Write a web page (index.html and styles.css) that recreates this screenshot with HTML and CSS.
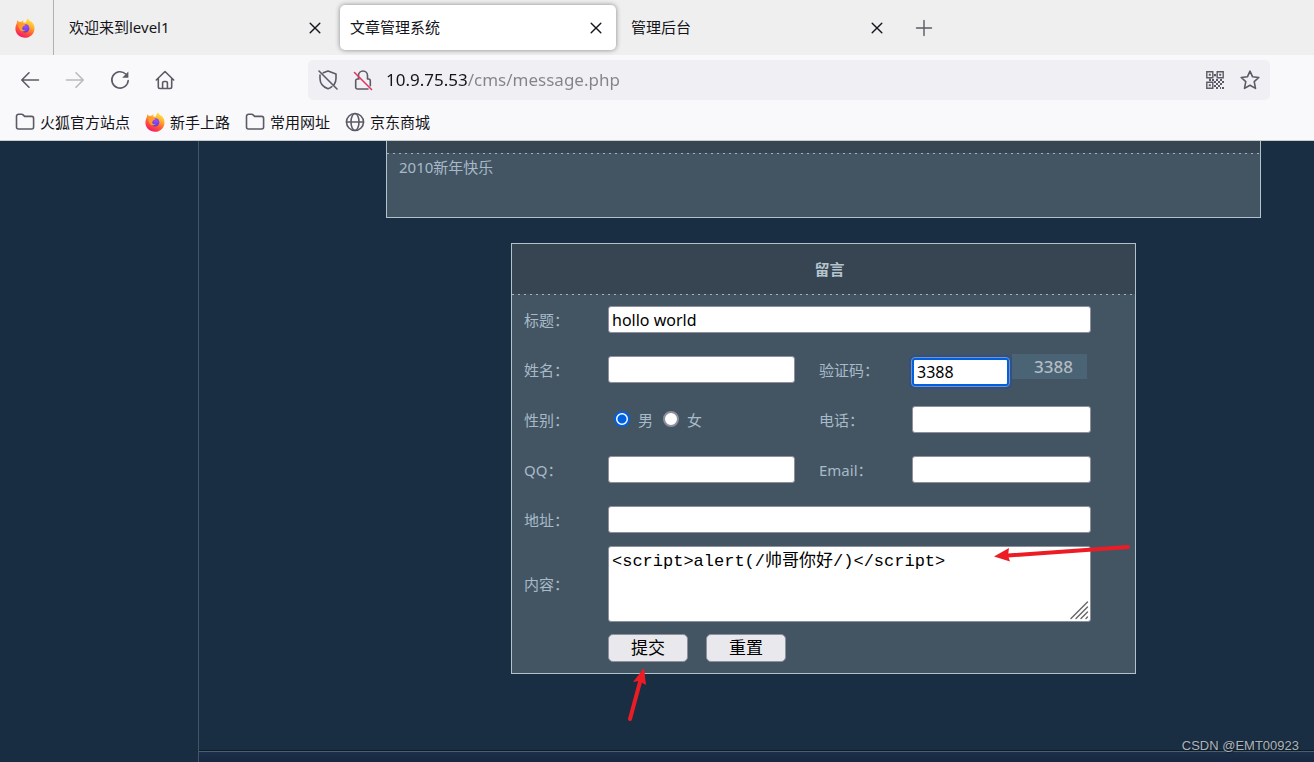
FILE: index.html
```html
<!DOCTYPE html>
<html lang="zh-CN">
<head>
<meta charset="utf-8">
<meta name="viewport" content="width=device-width, initial-scale=1">
<title>文章管理系统</title>
<link rel="stylesheet" href="styles.css">
</head>
<body>
<svg class="defs" aria-hidden="true">
  <defs>
    <linearGradient id="fire" x1="0.8" y1="0" x2="0.3" y2="1">
      <stop offset="0" stop-color="#fff04a"/>
      <stop offset="0.35" stop-color="#ffb02e"/>
      <stop offset="0.65" stop-color="#ff5a36"/>
      <stop offset="1" stop-color="#f5156c"/>
    </linearGradient>
    <radialGradient id="globe" cx="0.6" cy="0.3" r="0.8">
      <stop offset="0" stop-color="#a14bff"/>
      <stop offset="1" stop-color="#4a3fd0"/>
    </radialGradient>
    <symbol id="i-fox" viewBox="0 0 20 20">
      <path fill="url(#fire)" d="M13.2.3c.3 1.500 1.200 2.300 2.300 3.300 0 0 .9-.2 1.400.5 1.800 1.900 2.700 4 2.600 6.800-.2 5-4.400 8.800-9.500 8.800S.4 15.900.4 10.700c0-2.500.8-4.500 1.500-5.800 0-1.200.1-2.100.5-2.700.4.500.8 1.100 1.400 1.500.9-.1 1.600 0 2.300.2.8-.9 1.800-1.200 2.800-1.300-.6.500-1 1.100-1.100 1.700 1 .1 2.200.2 3.200.4.1-1.700.8-3.300 2.200-4.400z"/>
      <circle cx="10" cy="10.300" r="4.300" fill="url(#globe)"/>
      <path fill="#ff9a2b" d="M3.500 5.600c1.800-.9 4-.7 5 .2.700.500 1.600.400 2.100.600-.2 1.200-1.600 1.400-2.400 2-.5.400-.3 1.300-1.100 1.500 0 1.800 1.900 2.800 3.700 2.200-1 1.500-3.600 1.900-5.300.5C3.600 11 3.200 8 3.500 5.600z"/>
    </symbol>
    <symbol id="i-close" viewBox="0 0 12 12"><path d="M1.200 1.200l9.600 9.600M10.800 1.200l-9.600 9.600"/></symbol>
    <symbol id="i-folder" viewBox="0 0 20 20"><path d="M1.500 15V4.300a2 2 0 0 1 2-2h3.200c.6 0 1 .2 1.400.6l1.500 1.500h7a2 2 0 0 1 2 2V15a2 2 0 0 1-2 2H3.500a2 2 0 0 1-2-2z"/></symbol>
  </defs>
</svg>

<header class="browser">
  <div class="tabs">
    <div class="pinned"><svg class="icon"><use href="#i-fox"/></svg></div>
    <div class="tablist">
      <div class="tab"><button class="tab-title" type="button">欢迎来到level1</button><button class="tab-close" type="button" aria-label="关闭"><svg><use href="#i-close"/></svg></button></div>
      <div class="tab active"><button class="tab-title" type="button">文章管理系统</button><button class="tab-close" type="button" aria-label="关闭"><svg><use href="#i-close"/></svg></button></div>
      <div class="tab"><button class="tab-title" type="button">管理后台</button><button class="tab-close" type="button" aria-label="关闭"><svg><use href="#i-close"/></svg></button></div>
    </div>
    <button class="new-tab" type="button" aria-label="新标签页"><svg viewBox="0 0 16 16"><path d="M8 .5v15M.5 8h15"/></svg></button>
  </div>

  <nav class="toolbar">
    <div class="nav-buttons">
      <button type="button" aria-label="后退"><svg class="icon" viewBox="0 0 20 20"><path d="M18.500 10H2M9 2.800L1.800 10 9 17.200"/></svg></button>
      <button type="button" aria-label="前进" disabled><svg class="icon" viewBox="0 0 20 20"><path d="M1.500 10H18M11 2.800L18.200 10 11 17.200"/></svg></button>
      <button type="button" aria-label="刷新"><svg class="icon" viewBox="0 0 20 20"><path d="M18.200 10.500A8.200 8.200 0 1 1 15.700 4"/><path class="solid" d="M18.400 1.500v6.300h-6.200z"/></svg></button>
      <button type="button" aria-label="主页"><svg class="icon" viewBox="0 0 20 20"><path d="M1.300 10L10 1.500l8.700 8.500M3.300 8.500v8.300a1.700 1.700 0 0 0 1.700 1.700h10a1.700 1.700 0 0 0 1.700-1.700V8.500M7.600 18.500V13a1.500 1.500 0 0 1 1.500-1.500h1.800a1.500 1.500 0 0 1 1.500 1.500v5.500"/></svg></button>
    </div>
    <div class="urlbar">
      <svg class="icon" viewBox="0 0 20 20"><path d="M5.300 2.800L10 1l8 3v4.500c0 2.200-.6 4.200-1.800 6M2 5v3.500c0 4.800 3.300 8.600 8 10.300 1.400-.5 2.700-1.200 3.800-2.200M1 1l18 18"/></svg>
      <svg class="icon" viewBox="0 0 20 20"><path d="M5.500 8V5.500a4.500 4.500 0 0 1 9 0V9M14.500 9h1a1.800 1.800 0 0 1 1.800 1.800v5M15 19H4.500a1.800 1.800 0 0 1-1.800-1.800V10.800A1.800 1.800 0 0 1 4.500 9H6"/><path class="strike" d="M1.500 2.500l17 17"/></svg>
      <input class="url" type="text" aria-label="地址" value="10.9.75.53/cms/message.php">
      <button type="button" aria-label="二维码"><svg class="icon qr" viewBox="0 0 20 20">
        <path d="M1.800 1.800h6v6h-6zM12.200 1.800h6v6h-6zM1.800 12.200h6v6h-6z"/>
        <path class="solid" d="M3.800 3.800h2v2h-2zM14.200 3.800h2v2h-2zM3.800 14.200h2v2h-2zM8.800 4h2.400v2.200H8.800zM4 8.600h2v2.400H4zM7 9h2v2H7zM9 11h2v2H9zM11 9h2v2h-2zM13 11h2v2h-2zM15 9h2v2h-2zM17 11h2v2h-2zM11 13h2v2h-2zM15 13h2v2h-2zM9 15h2v2H9zM13 15h2v2h-2zM11 17h2v2h-2zM17 17h2v2h-2zM15 17h1v2h-1z"/></svg></button>
      <button type="button" aria-label="收藏"><svg class="icon" viewBox="0 0 20 20"><path d="M10 1.200l2.600 5.600 6.200.7-4.600 4.200 1.300 6.700L10 15.200l-5.500 3.200 1.300-6.700L1.200 7.500l6.200-.7z"/></svg></button>
    </div>
  </nav>

  <nav class="bookmarks">
    <a href="#"><svg class="icon"><use href="#i-folder"/></svg>火狐官方站点</a>
    <a href="#"><svg class="icon fox"><use href="#i-fox"/></svg>新手上路</a>
    <a href="#"><svg class="icon"><use href="#i-folder"/></svg>常用网址</a>
    <a href="#"><svg class="icon" viewBox="0 0 20 20"><circle cx="10" cy="10" r="8.500"/><ellipse cx="10" cy="10" rx="4" ry="8.500"/><path d="M1.500 10h17"/></svg>京东商城</a>
  </nav>
</header>

<div class="page">
  <aside class="side"></aside>
  <div class="column">
    <main class="main">
      <article class="post">
        <div class="post-head"></div>
        <p class="post-body">2010新年快乐</p>
      </article>

      <form class="message">
        <h2 class="message-title">留言</h2>
        <div class="fields">
          <label for="title">标题：</label>
          <input class="box wide" id="title" type="text" value="hollo world">

          <label for="name">姓名：</label>
          <input class="box" id="name" type="text">
          <label for="code">验证码：</label>
          <div class="code-row">
            <input class="box code" id="code" type="text" value="3388">
            <span class="captcha">3388</span>
          </div>

          <span>性别：</span>
          <div class="radios">
            <input type="radio" name="sex" id="male" checked><label for="male">男</label>
            <input type="radio" name="sex" id="female"><label for="female">女</label>
          </div>
          <label for="phone">电话：</label>
          <input class="box" id="phone" type="text">

          <label for="qq">QQ：</label>
          <input class="box" id="qq" type="text">
          <label for="email">Email：</label>
          <input class="box" id="email" type="text">

          <label for="address">地址：</label>
          <input class="box wide" id="address" type="text">

          <label for="content">内容：</label>
          <div class="area wide">
            <textarea class="box" id="content" spellcheck="false">&lt;script&gt;alert(/帅哥你好/)&lt;/script&gt;</textarea>
            <svg class="grip" viewBox="0 0 18 18"><path d="M1 17.500L17.500 1M6 17.500L17.500 6M11 17.500L17.500 11M16 17.500l1.500-1.500"/></svg>
            <svg class="arrow-left" viewBox="0 0 138 18"><path class="shaft" d="M134 4L14 12.500"/><path class="tip" d="M0 13.500L15 5l-1 7.500 2 6z"/></svg>
          </div>

          <div class="actions">
            <div class="submit">
              <button type="submit">提交</button>
              <svg class="arrow-up" viewBox="0 0 20 56"><path class="shaft" d="M4 51L14 14"/><path class="tip" d="M18 0L7 14l6-1 7 4z"/></svg>
            </div>
            <button type="reset">重置</button>
          </div>
        </div>
      </form>
    </main>
    <footer class="foot"></footer>
  </div>
  <div class="watermark">CSDN @EMT00923</div>
</div>
</body>
</html>
```
FILE: styles.css
```css
* { box-sizing: border-box; }

body {
  margin: 0;
  height: 100vh;
  display: flex;
  flex-direction: column;
  overflow: hidden;
  font: 15px/20px "Noto Sans", "Noto Sans CJK SC", sans-serif;
  color: #15141a;
  background: #1a2e43;
}

button, input, textarea { font: inherit; color: inherit; margin: 0; }
.browser button { border: 0; padding: 0; background: none; display: flex; align-items: center; }

svg { fill: none; stroke: #5b5b66; stroke-width: 1.6; stroke-linejoin: round; stroke-linecap: round; flex: none; overflow: visible; }
.defs { position: absolute; width: 0; height: 0; }
.icon { width: 20px; height: 20px; }
.solid { fill: #5b5b66; stroke: none; }
.strike { stroke: #e8325f; }

.browser { background: #f9f9fb; border-bottom: 1px solid #c6cdcb; }

.tabs { display: flex; height: 55px; background: #efefef; }
.pinned { width: 54px; border-right: 1px solid #b1b1b3; display: flex; align-items: center; justify-content: center; padding-right: 4px; }
.pinned .icon, .fox { stroke: none; }
.tablist { display: flex; gap: 5px; padding: 5px; flex: 0 1 848px; }
.tab { flex: 1 1 0; display: flex; align-items: center; padding: 0 14px 0 10px; border-radius: 5px; }
.tab.active { background: #fff; box-shadow: 0 0 5px rgba(0, 0, 0, .45); }
.browser .tab-title { flex: 1; height: 45px; padding-bottom: 2px; }
.tab-close svg { width: 12px; height: 12px; stroke: #15141a; stroke-width: 1.400; }
.new-tab svg { width: 16px; height: 16px; stroke-width: 1.400; }
.browser .new-tab { padding: 0 14px; }

.toolbar { display: flex; align-items: center; padding: 5px 44px 0 20px; }
.nav-buttons { display: flex; gap: 25px; flex: 0 0 288px; }
.nav-buttons button:disabled { opacity: .4; }
.urlbar { flex: 1; height: 40px; display: flex; align-items: center; gap: 15px; padding: 0 10px; border-radius: 5px; background: #f0eff4; }
.url {
  flex: 1;
  border: 0;
  padding: 0;
  outline: 0;
  margin-left: -2px;
  font-size: 17px;
  line-height: 24px;
  color: transparent;
  background: linear-gradient(90deg, #15141a 82px, #84838a 82px);
  background-clip: text;
  -webkit-background-clip: text;
}
.qr { stroke-width: 1.400; stroke-linejoin: miter; }

.bookmarks { display: flex; gap: 15px; height: 40px; padding: 4px 15px 0; }
.bookmarks a { display: flex; align-items: center; gap: 5px; color: inherit; text-decoration: none; height: 36px; }

.page { flex: 1; min-height: 0; display: flex; position: relative; color: #a8bac8; }
.side { flex: 0 0 199px; background: #182d41; border-right: 1px solid #3e5768; }
.column { flex: 1; display: flex; flex-direction: column; min-width: 0; }
.main { flex: 1; min-height: 0; display: flex; flex-direction: column; align-items: center; gap: 25px; padding: 0 0 0 134px; }
.foot { flex: 0 0 12px; border-top: 1px solid #0e1c28; box-shadow: inset 0 1px #48606f; background: linear-gradient(#1c3049, #172841); }

.post, .message { border: 1px solid #b0c2cc; background: #435563; }
.post { width: 875px; max-width: 100%; border-top: 0; }
.post-head, .message-title { background: repeating-linear-gradient(90deg, #a3b2bd 0 2px, #435563 2px 6px) bottom / 100% 1px no-repeat #364551; }
.post-head { height: 13px; }
.post-body { margin: 0; padding: 3px 12px 40px; }

.message { width: 625px; max-width: 100%; }
.message-title { margin: 0; padding: 15px 0 16px 12px; font-size: 15px; line-height: 20px; text-align: center; color: #b5c4cf; }
.fields { display: grid; grid-template-columns: 84px 211px 93px 1fr; grid-template-rows: repeat(5, 50px) auto auto; align-items: center; padding: 0 44px 0 12px; }
.wide { grid-column: 2 / -1; }
.box { width: 187px; height: 27px; margin-bottom: 1px; padding: 0 3px; border: 1px solid #8f8f9d; border-radius: 3px; background: #fff; color: #000; font-size: 16px; }
.fields > #phone, .fields > #email, .fields > .wide { width: 100%; }

.code-row { display: flex; align-items: flex-start; align-self: stretch; gap: 3px; padding-top: 9px; }
.code { width: 97px; height: 28px; margin-top: 4px; border: 2px solid #0060df; outline: 1px solid #7c93b4; box-shadow: 0 0 0 3px #2f5088; }
.captcha { width: 75px; height: 25px; padding-left: 8px; text-align: center; font-size: 17px; line-height: 25px; font-weight: 500; color: #b4bbc2; background: #4a6475; }

.radios { display: flex; align-items: center; padding: 0 0 1px 6px; }
.radios label { padding: 0 10px 0 8px; }
.radios input { appearance: none; width: 16px; height: 16px; margin-bottom: 2px; border: 2px solid #8f8f9d; border-radius: 50%; background: #fff; }
.radios input:checked { border-color: #0060df; background: radial-gradient(circle, #0060df 4px, #fff 5px); }

.area { position: relative; padding: 1px 0 12px; }
.area textarea { display: block; width: 100%; height: 76px; margin: 0; padding: 3px; resize: none; font: 17px/24px "Liberation Mono", "Noto Sans CJK SC", monospace; }
.grip { position: absolute; right: 3px; bottom: 15px; width: 18px; height: 18px; stroke: #66666b; stroke-width: 1.400; }
label[for="content"] { padding-bottom: 12px; }

.actions { grid-column: 2 / -1; display: flex; gap: 18px; padding-bottom: 11px; }
.actions button { display: block; width: 80px; height: 28px; padding: 0; border: 1px solid #8f8f9d; border-radius: 5px; background: #e9e9ed; color: #000; font-size: 17px; line-height: 24px; }
.submit { position: relative; }

.shaft { stroke: #ed1c24; stroke-width: 4; }
.tip { fill: #ed1c24; stroke: none; }
.arrow-left { position: absolute; right: -41px; top: -2px; width: 138px; height: 18px; }
.arrow-up { position: absolute; left: 18px; top: 34px; width: 20px; height: 56px; }

.watermark { position: absolute; right: 15px; bottom: 6px; font: 13px/20px "Liberation Sans", sans-serif; color: #adb4bb; text-shadow: 1px 1px 1px #111a22; }
```
